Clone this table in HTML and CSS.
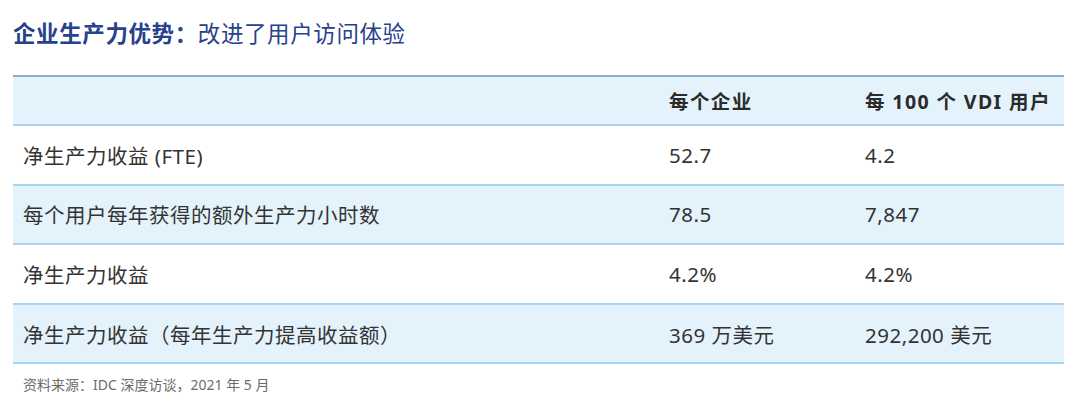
FILE: index.html
```html
<!DOCTYPE html>
<html lang="zh-CN">
<head>
<meta charset="utf-8">
<link rel="stylesheet" href="styles.css">
</head>
<body>
<div class="page">
  <h1 class="title"><span class="title-strong">企业生产力优势：</span>改进了用户访问体验</h1>
  <div class="table">
    <div class="row head">
      <div class="cell"></div>
      <div class="cell">每个企业</div>
      <div class="cell">每 100 个 VDI 用户</div>
    </div>
    <div class="row">
      <div class="cell">净生产力收益 (FTE)</div>
      <div class="cell">52.7</div>
      <div class="cell">4.2</div>
    </div>
    <div class="row alt">
      <div class="cell">每个用户每年获得的额外生产力小时数</div>
      <div class="cell">78.5</div>
      <div class="cell">7,847</div>
    </div>
    <div class="row">
      <div class="cell">净生产力收益</div>
      <div class="cell">4.2%</div>
      <div class="cell">4.2%</div>
    </div>
    <div class="row alt">
      <div class="cell">净生产力收益（每年生产力提高收益额）</div>
      <div class="cell">369 万美元</div>
      <div class="cell">292,200 美元</div>
    </div>
  </div>
  <p class="source">资料来源：IDC 深度访谈，2021 年 5 月</p>
</div>
</body>
</html>
```
FILE: styles.css
```css
html, body {
  margin: 0;
  padding: 0;
  background: #ffffff;
}
body {
  font-family: "Noto Sans", "Noto Sans CJK SC", sans-serif;
  color: #333333;
}
.page {
  padding: 19px 16px 0 13px;
  width: 1051px;
}
.title {
  margin: 0 0 26px 0;
  font-size: 22.5px;
  line-height: 30px;
  font-weight: 400;
  color: #27418d;
  letter-spacing: 0.6px;
}
.title-strong {
  font-weight: 700;
}
.table {
  border-top: 2px solid #93abcc;
}
.row {
  display: grid;
  grid-template-columns: 646px 196px 1fr;
  padding-left: 10px;
  height: 57.6px;
  align-items: center;
  border-bottom: 2px solid #a7d5ee;
  font-size: 20.5px;
  letter-spacing: 0.5px;
}
.row.head {
  height: 47px;
  background: #e4f3fb;
  font-weight: 700;
  font-size: 19.5px;
  letter-spacing: 1.4px;
  color: #2b2b2b;
}
.row.alt {
  background: #e4f3fb;
}
.source {
  margin: 11px 0 0 10px;
  font-size: 14px;
  line-height: 20px;
  color: #6b6b6b;
  letter-spacing: 0px;
}
```
